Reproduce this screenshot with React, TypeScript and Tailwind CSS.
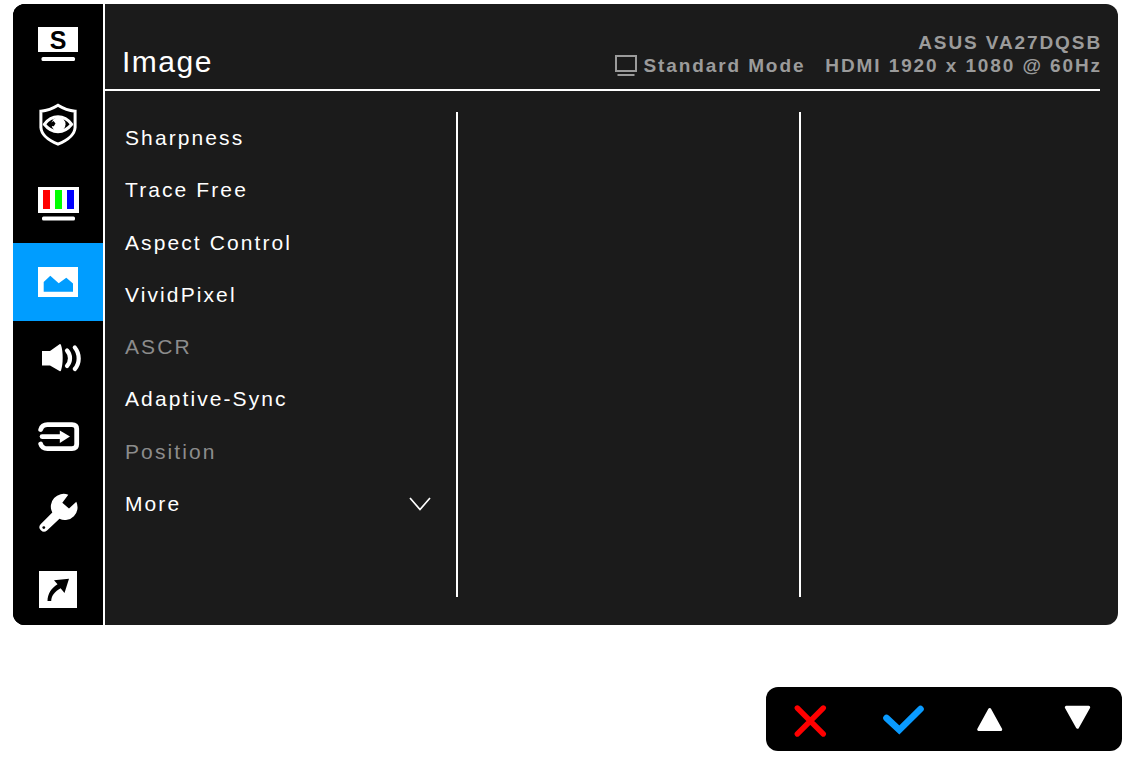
import type { ReactNode } from "react";

function SideIcon({ children }: { children: ReactNode }) {
  return (
    <svg viewBox="-2 0 48 44" className="h-11 w-12 overflow-visible" fill="none" aria-hidden="true">
      {children}
    </svg>
  );
}

const categories: { label: string; active?: boolean; icon: ReactNode }[] = [
  {
    label: "Splendid",
    icon: (
      <SideIcon>
        <rect x="2" y="5" width="40" height="25" fill="#fff" />
        <text x="22" y="26.5" textAnchor="middle" fontSize="25" fontWeight="700" fill="#000">
          S
        </text>
        <rect x="5.5" y="35" width="33.5" height="4" rx="1.5" fill="#fff" />
      </SideIcon>
    ),
  },
  {
    label: "Eye Care",
    icon: (
      <SideIcon>
        <path
          d="M22 3.2C17.5 6 12 8.500 4.900 9.200V25.500C5.500 33.500 13 38.500 22 42.200C31 38.500 38.500 33.500 39.100 25.500V9.200C32 8.500 26.500 6 22 3.200Z"
          stroke="#fff"
          strokeWidth="3"
        />
        <path
          d="M8.300 22.300C12 17.500 16.500 14.800 22 14.800C27.500 14.800 32 17.500 35.700 22.300C32 27 27.500 29.700 22 29.700C16.500 29.700 12 27 8.300 22.300Z"
          stroke="#fff"
          strokeWidth="3"
          strokeLinejoin="round"
        />
        <circle cx="22.500" cy="22.300" r="7" fill="#fff" />
        <path d="M14.500 21L17.500 19L19.500 21.500L17.800 24.200L14.500 24Z" fill="#000" />
      </SideIcon>
    ),
  },
  {
    label: "Color",
    icon: (
      <SideIcon>
        <rect x="2" y="5" width="41" height="26" fill="#fff" />
        <rect x="7" y="8" width="7" height="19" fill="#f00" />
        <rect x="19" y="8" width="7" height="19" fill="#0f0" />
        <rect x="31" y="8" width="7" height="19" fill="#00f" />
        <rect x="6" y="34.500" width="33" height="4" rx="1.500" fill="#fff" />
      </SideIcon>
    ),
  },
  {
    label: "Image",
    active: true,
    icon: (
      <SideIcon>
        <rect x="2" y="7" width="40" height="30" fill="#fff" />
        <path d="M7.700 22L14.300 15.700L22.700 23.300L30.300 17.700L37 23.500V31.700H7.700Z" fill="#009dff" />
      </SideIcon>
    ),
  },
  {
    label: "Sound",
    icon: (
      <SideIcon>
        <path d="M6 14H14L23.500 7.200Q24.500 6.800 25 8C27.300 15 27.300 27 25 33.500Q24.500 34.800 23.500 34L14 28.500H6Z" fill="#fff" />
        <path d="M31 13.500C35 18 35 24.500 31 29" stroke="#fff" strokeWidth="4.200" strokeLinecap="round" />
        <path d="M38.800 10.500C44 17 44 26 38.800 32" stroke="#fff" strokeWidth="4.200" strokeLinecap="round" />
      </SideIcon>
    ),
  },
  {
    label: "Input Select",
    icon: (
      <SideIcon>
        <path
          d="M4.700 16.500C5.500 13.500 8 11.600 11.500 11.600H36Q40.700 11.600 40.700 15.800V31.300Q40.700 35.600 36 35.600H11.500C8 35.600 5.500 34 4.700 31"
          stroke="#fff"
          strokeWidth="4.800"
          strokeLinecap="round"
        />
        <path d="M6 23.600H24" stroke="#fff" strokeWidth="4.600" strokeLinecap="round" />
        <path d="M23.800 17.400L34 23.600L23.800 29.900Z" fill="#fff" />
      </SideIcon>
    ),
  },
  {
    label: "System Setup",
    icon: (
      <SideIcon>
        <path
          d="M32.300 5.800L26.300 13.800L33 19.500L40.300 12.800A12.700 12.700 0 0 1 23.500 29.800L11 41.500A4.500 4.500 0 0 1 4.600 35.200L16.300 23.500A12.700 12.700 0 0 1 32.300 5.800Z"
          fill="#fff"
        />
        <circle cx="7.800" cy="38.600" r="1.400" fill="#000" />
      </SideIcon>
    ),
  },
  {
    label: "Shortcut",
    icon: (
      <SideIcon>
        <rect x="3" y="6" width="38" height="37" fill="#fff" />
        <path d="M11.500 36C11.500 29 15.500 23 21.500 19.300L18 15.300L33 13.800L28.500 28L24.600 23.300C19 26.500 15.500 30.500 15.200 36Z" fill="#000" />
      </SideIcon>
    ),
  },
];

const menuItems: { label: string; disabled?: boolean; more?: boolean }[] = [
  { label: "Sharpness" },
  { label: "Trace Free" },
  { label: "Aspect Control" },
  { label: "VividPixel" },
  { label: "ASCR", disabled: true },
  { label: "Adaptive-Sync" },
  { label: "Position", disabled: true },
  { label: "More", more: true },
];

const controls: { label: string; icon: ReactNode }[] = [
  {
    label: "Close",
    icon: <path d="M9.300 11L35.300 37M35.300 11L9.300 37" stroke="#f00" strokeWidth="5.400" strokeLinecap="round" />,
  },
  {
    label: "Confirm",
    icon: <path d="M9.500 21L22.300 33L43.500 12" stroke="#0a9bff" strokeWidth="6.600" strokeLinecap="round" />,
  },
  {
    label: "Up",
    icon: (
      <path d="M23.700 12.500L12.700 32.500H34.700Z" fill="#fff" stroke="#fff" strokeWidth="3" strokeLinejoin="round" />
    ),
  },
  {
    label: "Down",
    icon: (
      <path d="M11.300 10.300H33.700L22.500 30.300Z" fill="#fff" stroke="#fff" strokeWidth="3" strokeLinejoin="round" />
    ),
  },
];

function Sidebar() {
  return (
    <nav
      aria-label="Categories"
      className="grid w-[92px] shrink-0 grid-rows-[80px_80px_79px_78px_repeat(4,76px)] border-r-2 border-white bg-black"
    >
      {categories.map((c) => (
        <button
          key={c.label}
          type="button"
          aria-label={c.label}
          aria-pressed={!!c.active}
          className={`flex items-center justify-center ${c.active ? "bg-[#009dff]" : "bg-black"}`}
        >
          {c.icon}
        </button>
      ))}
    </nav>
  );
}

function Header() {
  return (
    <header>
      <div className="flex items-end justify-between pt-[27px] pr-4 pb-3 pl-[17px]">
        <h1 className="text-[30px] leading-[30px] tracking-wider text-white">Image</h1>
        <div className="text-right text-[19px] leading-[23px] font-bold tracking-widest whitespace-nowrap text-[#9b9b9b]">
          <p>ASUS VA27DQSB</p>
          <div className="flex items-center justify-end gap-5">
            <p className="flex items-center gap-1.5">
              <svg viewBox="0 0 22 22" className="size-[22px]" fill="none" stroke="currentColor" aria-hidden="true">
                <rect x="1" y="1" width="20" height="15" strokeWidth="2" />
                <path d="M2.500 20H19.500" strokeWidth="2" />
              </svg>
              Standard Mode
            </p>
            <p>HDMI 1920 x 1080 @ 60Hz</p>
          </div>
        </div>
      </div>
      <hr className="mr-[18px] border-t-2 border-white" />
    </header>
  );
}

function Menu() {
  return (
    <ul className="grid min-h-[418px] auto-rows-fr">
      {menuItems.map((item) => (
        <li key={item.label} className="flex">
          <button
            type="button"
            disabled={item.disabled}
            className="flex w-full items-center justify-between pr-[25px] pl-5 text-left text-[21px] leading-6 tracking-widest text-white disabled:text-[#8c8c8c]"
          >
            {item.label}
            {item.more && (
              <svg viewBox="0 0 22 14" className="h-3.5 w-[22px]" fill="none" aria-hidden="true">
                <path d="M1 1L11 12.500L21 1" stroke="#fff" strokeWidth="1.700" />
              </svg>
            )}
          </button>
        </li>
      ))}
    </ul>
  );
}

export default function App() {
  return (
    <div className="min-h-screen bg-white pt-1 pb-1.5 font-['Liberation_Sans',Arial,sans-serif]">
      <main className="mr-[9px] ml-[13px] flex overflow-hidden rounded-xl bg-[#1b1b1b]">
        <Sidebar />
        <section className="flex min-w-0 flex-1 flex-col">
          <Header />
          <div className="mt-[21px] mb-7 grid flex-1 grid-cols-[353fr_343fr_317fr]">
            <div className="border-r-2 border-white">
              <Menu />
            </div>
            <div className="border-r-2 border-white" />
            <div />
          </div>
        </section>
      </main>
      <div
        role="toolbar"
        aria-label="Monitor controls"
        className="mt-[62px] mr-[5px] ml-auto grid w-[356px] grid-cols-4 rounded-xl bg-black py-2.5"
      >
        {controls.map((c) => (
          <button key={c.label} type="button" aria-label={c.label} className="flex items-center justify-center">
            <svg viewBox="0 0 45 44" className="h-11 w-[45px] overflow-visible" fill="none" aria-hidden="true">
              {c.icon}
            </svg>
          </button>
        ))}
      </div>
    </div>
  );
}
